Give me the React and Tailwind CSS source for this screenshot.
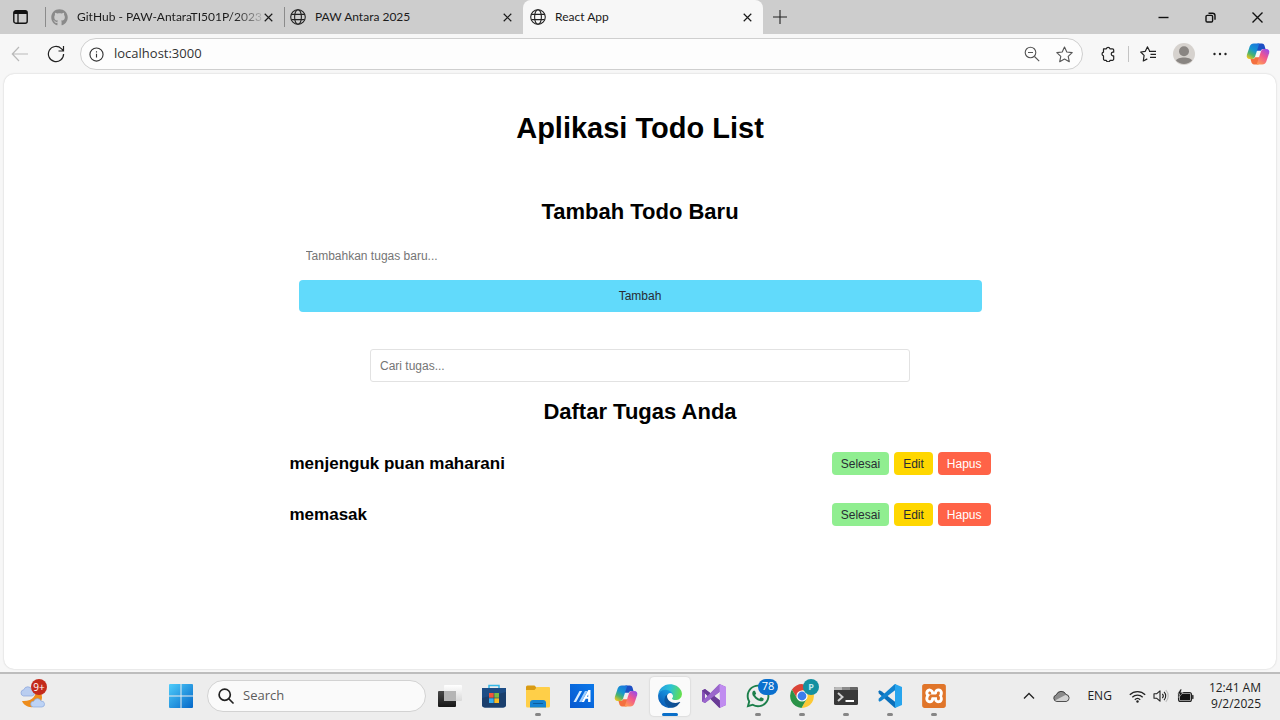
import React from "react";
import { FaGithub, FaWhatsapp } from "react-icons/fa";
import { SiXampp } from "react-icons/si";

function GlobeIcon() {
  return (
    <svg viewBox="0 0 16 16" className="size-4 shrink-0" fill="none" stroke="#222" strokeWidth="1.1">
      <circle cx="8" cy="8" r="7.3" />
      <ellipse cx="8" cy="8" rx="3.4" ry="7.3" />
      <path d="M1.4 5.4h13.2M1.4 10.6h13.2" />
    </svg>
  );
}

function CloseIcon() {
  return (
    <svg viewBox="0 0 10 10" className="size-[9px]" fill="none" stroke="#1a1a1a" strokeWidth="1.3">
      <path d="M.8.8l8.4 8.4M9.2.8L.8 9.2" />
    </svg>
  );
}

function CopilotIcon({ id }) {
  return (
    <svg viewBox="0 0 24 24" className="size-6">
      <defs>
        <linearGradient id={`${id}-a`} x1="0.7" y1="0" x2="0.2" y2="1">
          <stop offset="0" stopColor="#1b78dc" />
          <stop offset="0.4" stopColor="#1596d0" />
          <stop offset="0.7" stopColor="#4db46a" />
          <stop offset="1" stopColor="#f2c51d" />
        </linearGradient>
        <linearGradient id={`${id}-b`} x1="0.8" y1="0" x2="0.2" y2="1">
          <stop offset="0" stopColor="#9a4be8" />
          <stop offset="0.45" stopColor="#f0568f" />
          <stop offset="1" stopColor="#ff9a55" />
        </linearGradient>
      </defs>
      <path fill="#1d4fc4" d="M11.500 1.500h4.300c1.800 0 2.600 1.300 3 2.900l.7 2.600h-1.900c-1.500 0-2.300.6-2.800 1.800h-6z" />
      <path fill="#f4703f" d="M12.500 22.500H8.200c-1.800 0-2.600-1.300-3-2.900L4.500 17h1.900c1.500 0 2.300-.6 2.800-1.800h6z" />
      <path
        fill={`url(#${id}-a)`}
        d="M7.800 1.500h5.500l-4.200 13c-.6 1.700-1.500 2.500-3.100 2.500H3.800C1.300 17 .2 15.300.9 12.800l2.800-8.300c.7-2 2-3 4.100-3z"
      />
      <path
        fill={`url(#${id}-b)`}
        d="M16.200 22.500h-5.500l4.200-13c.6-1.700 1.500-2.500 3.100-2.500h2.200c2.500 0 3.600 1.700 2.900 4.200l-2.800 8.300c-.7 2-2 3-4.100 3z"
      />
    </svg>
  );
}

function StoreIcon() {
  return (
    <svg viewBox="0 0 24 24" className="size-6">
      <path d="M7 5V1.500h10V5" fill="none" stroke="#35b8e8" strokeWidth="1.500" />
      <path d="M0 4h24v16.500a3 3 0 0 1-3 3H3a3 3 0 0 1-3-3z" fill="#1d4d86" />
      <path d="M0 14l24-6v12.500a3 3 0 0 1-3 3H3a3 3 0 0 1-3-3z" fill="#1a3f6d" />
      <path d="M7 9h4.700v4.700H7z" fill="#f0553a" />
      <path d="M12.300 9H17v4.700h-4.700z" fill="#7cbb42" />
      <path d="M7 14.300h4.700V19H7z" fill="#35aef0" />
      <path d="M12.300 14.300H17V19h-4.700z" fill="#fabb22" />
    </svg>
  );
}

function TaskViewIcon() {
  return (
    <svg viewBox="0 0 24 24" className="size-6">
      <defs>
        <linearGradient id="tv-back" x1="0" y1="0" x2="0" y2="1">
          <stop offset="0" stopColor="#484848" />
          <stop offset="1" stopColor="#171717" />
        </linearGradient>
        <linearGradient id="tv-front" x1="0" y1="0" x2="0" y2="1">
          <stop offset="0" stopColor="#ffffff" />
          <stop offset="1" stopColor="#d9d9d9" />
        </linearGradient>
      </defs>
      <rect x="0" y="7" width="18" height="16" rx="1" fill="url(#tv-back)" />
      <rect x="6" y="1" width="18" height="16" rx="1" fill="url(#tv-front)" />
      <path d="M6 7h12v10H6z" fill="#b5b5b5" />
    </svg>
  );
}

function FolderIcon() {
  return (
    <svg viewBox="0 0 24 24" className="size-6">
      <path d="M0 3a1.500 1.500 0 0 1 1.500-1.500h7L11 4v4H0z" fill="#d99b13" />
      <path d="M0 6h8.500L11 3h12a1 1 0 0 1 1 1v18a1.500 1.500 0 0 1-1.500 1.500h-21A1.500 1.500 0 0 1 0 22z" fill="#ffcf48" />
      <path d="M4 23.500V19a3 3 0 0 1 3-3h10a3 3 0 0 1 3 3v4.500z" fill="#1583d2" />
      <path d="M7.500 19.500h9" stroke="#0b5c9c" strokeWidth="1.200" strokeLinecap="round" />
    </svg>
  );
}

function AsusIcon() {
  return (
    <svg viewBox="0 0 24 24" className="size-6">
      <defs>
        <linearGradient id="asus-bg" x1="0" y1="1" x2="1" y2="0">
          <stop offset="0" stopColor="#0758cf" />
          <stop offset="1" stopColor="#0a78ea" />
        </linearGradient>
      </defs>
      <path d="M0 0h24v24H0z" fill="url(#asus-bg)" />
      <path d="M3.500 18L9.500 7h2.600L6.100 18z" fill="#d9edff" />
      <path d="M9 18l6-11h2.500l-6 11z" fill="#9fcfff" />
      <path d="M11.500 18L18.300 6h2.200v12h-2.400v-3.200h-2.400L14 18zM16.900 12.800h1.300v-2.400z" fill="#fff" />
    </svg>
  );
}

function EdgeIcon() {
  return (
    <svg viewBox="4 5 257 254" className="size-6">
      <defs>
        <linearGradient id="edge-a" x1="63" y1="178" x2="241" y2="178" gradientUnits="userSpaceOnUse">
          <stop offset="0" stopColor="#0c59a4" />
          <stop offset="1" stopColor="#114a8b" />
        </linearGradient>
        <linearGradient id="edge-b" x1="157" y1="90" x2="46" y2="225" gradientUnits="userSpaceOnUse">
          <stop offset="0" stopColor="#1b9de2" />
          <stop offset="0.5" stopColor="#127fd1" />
          <stop offset="1" stopColor="#0b5fb8" />
        </linearGradient>
        <linearGradient id="edge-c" x1="20" y1="60" x2="255" y2="125" gradientUnits="userSpaceOnUse">
          <stop offset="0" stopColor="#259fe0" />
          <stop offset="0.45" stopColor="#2cc3d4" />
          <stop offset="1" stopColor="#66e048" />
        </linearGradient>
      </defs>
      <path
        fill="url(#edge-a)"
        d="M235.680 195.460a93.730 93.730 0 0 1-10.540 4.710 101.870 101.870 0 0 1-35.900 6.460c-47.320 0-88.540-32.550-88.540-74.320A31.480 31.480 0 0 1 117.130 105c-42.800 1.800-53.800 46.400-53.800 72.530 0 73.880 68.090 81.370 82.760 81.370 7.910 0 19.840-2.300 27-4.560l1.310-.44a128.340 128.340 0 0 0 66.600-52.800 4 4 0 0 0-5.320-5.640Z"
      />
      <path
        fill="url(#edge-b)"
        d="M110.340 246.340A79.200 79.200 0 0 1 87.600 225a80.720 80.720 0 0 1 29.530-120c3.120-1.470 8.450-4.130 15.540-4a32.350 32.350 0 0 1 25.690 13 31.880 31.880 0 0 1 6.360 18.660c0-.21 24.460-79.600-80-79.600-43.900 0-80 41.660-80 78.210a130.150 130.150 0 0 0 12.110 56 128 128 0 0 0 156.380 67.110 75.550 75.550 0 0 1-62.780-8Z"
      />
      <path
        fill="url(#edge-c)"
        d="M156.940 153.780c-.81 1.050-3.300 2.500-3.300 5.660 0 2.610 1.700 5.120 4.720 7.230 14.380 10 41.490 8.680 41.560 8.680a59.560 59.560 0 0 0 30.270-8.350A61.380 61.380 0 0 0 260.620 114c.26-22.410-8-37.310-11.340-43.910C228.090 28.760 182.350 5 132.620 5a128 128 0 0 0-128 126.200c.48-36.540 36.800-66.050 80-66.050 3.500 0 23.460.34 42 10.070 16.340 8.580 24.900 18.940 30.850 29.210 6.180 10.670 7.280 24.150 7.280 29.520s-2.740 13.330-7.810 19.830Z"
      />
    </svg>
  );
}

function VisualStudioIcon() {
  return (
    <svg viewBox="0 0 24 24" className="size-6">
      <path
        fill="#8752b8"
        fillRule="evenodd"
        d="M17.500 0L8.500 9.300 3 5 0 6.500v11L3 19l5.500-4.300 9 9.300 6.500-3V3zM3 9v6l3-3zM18 7.500v9L12.300 12z"
      />
      <path d="M0 6.500L3 5l15 11.500V24h-.5z" fill="#6a3c96" />
      <path d="M0 17.500L3 19l15-11.500V0h-.5z" fill="#9b67cc" />
      <path d="M17.500 0L24 3v18l-6.500 3 .5-1z" fill="#c08cf0" />
    </svg>
  );
}

function ChromeIcon() {
  return (
    <svg viewBox="0 0 24 24" className="size-6">
      <path d="M12 6.500H22.600A12 12 0 0 0 1.940 5.570L7.240 14.750z" fill="#db4437" />
      <path d="M12 6.500H22.600A12 12 0 0 0 1.940 5.570L7.240 14.750z" fill="#fcc934" transform="rotate(120 12 12)" />
      <path d="M12 6.500H22.600A12 12 0 0 0 1.940 5.570L7.240 14.750z" fill="#2b9348" transform="rotate(240 12 12)" />
      <circle cx="12" cy="12" r="5.600" fill="#fff" />
      <circle cx="12" cy="12" r="4.400" fill="#3b7ded" />
    </svg>
  );
}

function TerminalIcon() {
  return (
    <svg viewBox="0 0 24 24" className="size-6">
      <rect x="0" y="3" width="24" height="18" rx="1.500" fill="#383838" />
      <path d="M0 6V4.500A1.500 1.500 0 0 1 1.500 3H8v3z" fill="#b9b9b9" />
      <path d="M8 3h8v3H8z" fill="#8a8a8a" />
      <path d="M16 3h6.500A1.500 1.500 0 0 1 24 4.500V6h-8z" fill="#666" />
      <path d="M4 9l4.500 4L4 17" fill="none" stroke="#d0d0d0" strokeWidth="2" />
      <path d="M11.500 17H20" stroke="#fff" strokeWidth="2" />
    </svg>
  );
}

function VsCodeIcon() {
  return (
    <svg viewBox="0 0 24 24" className="size-6">
      <path d="M1.600 6.300L3.400 7.300 18 18.500v5.300h-1.400L.6 9.300V7.300z" fill="#0a6fba" />
      <path d="M1.600 17.700l1.800-1L18 5.500V.2h-1.400L.6 14.700v2z" fill="#1283cf" />
      <path d="M17 0l7 3v18l-7 3z" fill="#27a5ee" />
    </svg>
  );
}

function WhatsAppIcon() {
  return <FaWhatsapp className="size-[26px] text-[#1c7f4b]" />;
}

function XamppIcon() {
  return (
    <span className="block size-6 rounded-sm bg-white">
      <SiXampp className="size-6 text-[#e0752a]" />
    </span>
  );
}

function WindowsIcon() {
  return (
    <svg viewBox="0 0 24 24" className="size-6">
      <defs>
        <linearGradient id="win" x1="0" y1="0" x2="24" y2="24" gradientUnits="userSpaceOnUse">
          <stop offset="0" stopColor="#4fcdfb" />
          <stop offset="1" stopColor="#0467c8" />
        </linearGradient>
      </defs>
      <path
        fill="url(#win)"
        d="M1 0h10.500v11.500H0V1a1 1 0 0 1 1-1zM12.500 0H23a1 1 0 0 1 1 1v10.500H12.500zM0 12.500h11.500V24H1a1 1 0 0 1-1-1zM12.500 12.500H24V23a1 1 0 0 1-1 1H12.500z"
      />
    </svg>
  );
}

function WeatherIcon() {
  return (
    <svg viewBox="0 0 26 26" className="size-[26px]">
      <path d="M15 5c3 7-3 14-13 13 3 7 12 8 17 3s4-12-4-16z" fill="#ee8d1c" />
      <path d="M3.500 13a3.200 3.200 0 0 1 .3-6.300 4.200 4.200 0 0 1 8 0A3.200 3.200 0 0 1 12 13z" fill="#b9cdf0" stroke="#8aa4da" strokeWidth=".7" />
      <path d="M13.500 24a2.900 2.900 0 0 1 .2-5.800 4 4 0 0 1 7.500 0A2.900 2.900 0 0 1 22 24z" fill="#bdd3f5" stroke="#8aa9de" strokeWidth=".7" />
    </svg>
  );
}

const TABS = [
  { title: "GitHub - PAW-AntaraTI501P/2023", icon: <FaGithub className="size-[17px] shrink-0 text-[#8a8a8a]" />, faded: true },
  { title: "PAW Antara 2025", icon: <GlobeIcon /> },
];

function TabStrip() {
  return (
    <header className="flex h-[34px] items-center bg-[#cdcdcd] font-['Lato','Open_Sans',sans-serif]">
      <button aria-label="Tab actions" className="ml-[13px] mr-[17px] flex">
        <svg viewBox="0 0 15 14" className="h-[14px] w-[15px]" fill="none" stroke="#111">
          <rect x=".8" y=".8" width="13.400" height="12.400" rx="2" strokeWidth="1.400" />
          <path d="M1 2.500h13" strokeWidth="3" />
          <path d="M5 3v10" strokeWidth="1.300" />
        </svg>
      </button>
      {TABS.map((tab) => (
        <div key={tab.title} className="flex h-full w-[239px] shrink-0 items-center">
          <span className="h-5 w-px shrink-0 bg-[#8b8b8b]" />
          <button className="ml-[5px] flex min-w-0 flex-1 items-center gap-[9px] text-left text-xs text-[#1b1b1b]">
            {tab.icon}
            <span
              className={
                tab.faded
                  ? "whitespace-nowrap bg-gradient-to-r from-[#1b1b1b] from-85% to-[#b5b5b5] bg-clip-text text-transparent"
                  : "whitespace-nowrap"
              }
            >
              {tab.title}
            </span>
          </button>
          <button aria-label={`Close ${tab.title}`} className="mr-[11px] shrink-0">
            <CloseIcon />
          </button>
        </div>
      ))}
      <div className="flex h-full w-[240px] items-center rounded-t-lg bg-[#f7f7f7] px-[7px]">
        <button className="flex flex-1 items-center gap-[9px] text-left text-xs text-[#1b1b1b]">
          <GlobeIcon />
          <span>React App</span>
        </button>
        <button aria-label="Close React App" className="mr-1">
          <CloseIcon />
        </button>
      </div>
      <button aria-label="New tab" className="ml-[10px]">
        <svg viewBox="0 0 14 14" className="size-[14px]" fill="none" stroke="#222" strokeWidth="1.100">
          <path d="M7 0v14M0 7h14" />
        </svg>
      </button>
      <div className="ml-auto mr-[17px] flex items-center gap-9">
        <button aria-label="Minimize">
          <svg viewBox="0 0 11 11" className="size-[11px]" stroke="#111" strokeWidth="1.400">
            <path d="M.5 5.500h10" />
          </svg>
        </button>
        <button aria-label="Restore">
          <svg viewBox="0 0 11 11" className="size-[11px]" fill="none" stroke="#111" strokeWidth="1.400">
            <rect x="1" y="3.400" width="6.600" height="6.600" rx="1.200" />
            <path d="M3.500 1.300h4a2.500 2.500 0 0 1 2.500 2.500v4" />
          </svg>
        </button>
        <button aria-label="Close window">
          <svg viewBox="0 0 11 11" className="size-[11px]" stroke="#111" strokeWidth="1.400">
            <path d="M.5.5l10 10M10.500.5l-10 10" />
          </svg>
        </button>
      </div>
    </header>
  );
}

function Toolbar() {
  return (
    <div className="flex h-10 items-center pr-[10px] pl-[11px]">
      <button aria-label="Back" disabled>
        <svg viewBox="0 0 18 18" className="size-[18px]" fill="none" stroke="#b9b9b9" strokeWidth="1.200">
          <path d="M17 9H1.500M8 2L1.300 9 8 16" />
        </svg>
      </button>
      <button aria-label="Refresh" className="ml-[18px]">
        <svg viewBox="0 0 18 18" className="size-[18px]" fill="none" stroke="#222" strokeWidth="1.200">
          <path d="M16.600 9a7.600 7.600 0 1 1-2.300-5.400L16.300 5.500M16.500 1v5h-5" />
        </svg>
      </button>
      <div className="ml-[15px] flex h-8 min-w-0 flex-1 items-center rounded-full border border-[#cfcfcf] bg-[#fdfdfd] pr-[9px] pl-2">
        <svg viewBox="0 0 16 16" className="size-[15px] shrink-0" fill="none" stroke="#333" strokeWidth="1.200">
          <circle cx="8" cy="8" r="7" />
          <path d="M8 7.200v4M8 4.500v1.300" />
        </svg>
        <input
          aria-label="Address"
          defaultValue="localhost:3000"
          className="ml-[10px] min-w-0 flex-1 bg-transparent text-[13px] text-[#333] outline-none"
        />
        <button aria-label="Zoom out">
          <svg viewBox="0 0 16 16" className="size-4" fill="none" stroke="#555" strokeWidth="1.100">
            <circle cx="6.500" cy="6.500" r="5.300" />
            <path d="M10.500 10.500l4.700 4.700M4 6.500h5" />
          </svg>
        </button>
        <button aria-label="Add to favorites" className="ml-4">
          <svg viewBox="0 0 17 17" className="size-[17px]" fill="none" stroke="#555" strokeWidth="1.100" strokeLinejoin="round">
            <path d="M8.500 1l2.300 5 5.400.6-4 3.700 1.100 5.400-4.800-2.700-4.800 2.700 1.100-5.400-4-3.700 5.400-.6z" />
          </svg>
        </button>
      </div>
      <button aria-label="Extensions" className="ml-[17px]">
        <svg viewBox="0 0 16 16" className="size-4" fill="none" stroke="#222" strokeWidth="1.200" strokeLinejoin="round">
          <path d="M3.500 2.800h2.800a1.900 1.900 0 0 1 3.700 0h2.500a1.200 1.200 0 0 1 1.200 1.200v2.200h-1a1.900 1.900 0 0 0 0 3.700h1v3.200a1.200 1.200 0 0 1-1.200 1.200H10a1.900 1.900 0 0 1-3.700 0H4.700a1.200 1.200 0 0 1-1.200-1.200V9.900a1.900 1.900 0 0 1 0-3.700z" />
        </svg>
      </button>
      <span className="ml-3 h-4 w-px bg-[#c4c4c4]" />
      <button aria-label="Favorites" className="ml-[11px]">
        <svg viewBox="0 0 17 16" className="h-4 w-[17px]" fill="none" stroke="#222" strokeWidth="1.200" strokeLinejoin="round">
          <path d="M9.500 4.800L7.400.900 5.300 5.300.7 6l3.400 3.400-.8 5.600 4-2.100M9 5.300h7M10.500 8.300H16M10 11.300h6" />
        </svg>
      </button>
      <button aria-label="Profile" className="ml-4">
        <svg viewBox="0 0 22 22" className="size-[22px]">
          <circle cx="11" cy="11" r="11" fill="#d6d2ce" />
          <circle cx="11" cy="8.300" r="5" fill="#898582" />
          <path d="M3 17.500C4.500 13.500 17.500 13.500 19 17.500A11 11 0 0 1 3 17.500z" fill="#898582" />
        </svg>
      </button>
      <button aria-label="Settings and more" className="ml-[18px]">
        <svg viewBox="0 0 14 4" className="h-1 w-[14px]" fill="#222">
          <circle cx="1.500" cy="2" r="1.200" />
          <circle cx="7" cy="2" r="1.200" />
          <circle cx="12.500" cy="2" r="1.200" />
        </svg>
      </button>
      <button aria-label="Copilot" className="ml-[19px]">
        <CopilotIcon id="bar" />
      </button>
    </div>
  );
}

function TodoPage() {
  const todos = ["menjenguk puan maharani", "memasak"];
  const action = "h-[23px] rounded px-[9px] text-xs";
  return (
    <main className="mx-1 flex-1 rounded-[10px] bg-white px-4 pt-[37px] pb-8 font-['Liberation_Sans',Arial,sans-serif] text-black shadow-[0_0_2px_rgba(0,0,0,0.2)]">
      <h1 className="text-center text-[29px] leading-[34px] font-bold">Aplikasi Todo List</h1>
      <div className="mx-auto max-w-[701px]">
        <form className="mt-[54px] px-[9px]" onSubmit={(e) => e.preventDefault()}>
          <h2 className="text-center text-[22px] leading-[26px] font-bold">Tambah Todo Baru</h2>
          <input
            aria-label="Tambahkan tugas baru"
            placeholder="Tambahkan tugas baru..."
            className="mt-[15px] block h-8 w-full px-[7px] text-xs outline-none placeholder:text-[#757575]"
          />
          <button className="mt-2 block h-8 w-full rounded bg-[#61dafb] text-xs text-[#282c34]">Tambah</button>
        </form>
        <input
          type="search"
          aria-label="Cari tugas"
          placeholder="Cari tugas..."
          className="mx-auto mt-[37px] block h-[33px] w-full max-w-[540px] rounded-[3px] border border-[#e2e2e2] px-[9px] text-xs outline-none placeholder:text-[#757575]"
        />
        <h2 className="mt-[17px] text-center text-[22px] leading-[26px] font-bold">Daftar Tugas Anda</h2>
        <ul className="mt-[13px]">
          {todos.map((todo) => (
            <li key={todo} className="flex h-[51px] items-center justify-between">
              <h3 className="text-[17px] font-bold">{todo}</h3>
              <div className="flex gap-[5px]">
                <button className={`${action} bg-[#90ee90] text-[#282c34]`}>Selesai</button>
                <button className={`${action} bg-[#ffd700] text-[#282c34]`}>Edit</button>
                <button className={`${action} bg-[#ff6347] text-white`}>Hapus</button>
              </div>
            </li>
          ))}
        </ul>
      </div>
    </main>
  );
}

const APPS = [
  { name: "Task View", icon: <TaskViewIcon /> },
  { name: "Microsoft Store", icon: <StoreIcon /> },
  { name: "File Explorer", icon: <FolderIcon />, running: true },
  { name: "MyASUS", icon: <AsusIcon /> },
  { name: "Copilot", icon: <CopilotIcon id="dock" /> },
  { name: "Microsoft Edge", icon: <EdgeIcon />, active: true },
  { name: "Visual Studio", icon: <VisualStudioIcon /> },
  { name: "WhatsApp", icon: <WhatsAppIcon />, running: true, badge: "78" },
  { name: "Chrome", icon: <ChromeIcon />, running: true, profile: "P" },
  { name: "Terminal", icon: <TerminalIcon />, running: true },
  { name: "Visual Studio Code", icon: <VsCodeIcon />, running: true },
  { name: "XAMPP", icon: <XamppIcon />, running: true },
];

function DockButton({ app }) {
  return (
    <button
      aria-label={app.name}
      className={
        app.active
          ? "relative flex h-[39px] w-10 items-center justify-center rounded bg-[#fafafa] shadow-[0_0_2px_rgba(0,0,0,0.2)]"
          : "relative flex h-[39px] w-10 items-center justify-center rounded"
      }
    >
      {app.icon}
      {app.active && <span className="absolute bottom-0 h-[3px] w-4 rounded-full bg-[#0a6fc9]" />}
      {app.running && <span className="absolute bottom-0 h-[3px] w-[6px] rounded-full bg-[#868686]" />}
      {app.badge && (
        <span className="absolute top-[2px] right-0 flex h-4 w-5 items-center justify-center rounded-full bg-[#0a70ce] text-[11px] text-white">
          {app.badge}
        </span>
      )}
      {app.profile && (
        <span className="absolute top-[2px] right-[3px] flex size-4 items-center justify-center rounded-full bg-[#1490a0] text-[9px] font-bold text-[#bfe9ee]">
          {app.profile}
        </span>
      )}
    </button>
  );
}

function Taskbar() {
  return (
    <footer className="flex h-12 shrink-0 items-center border-t-2 border-[#bdbdbd] bg-[#ededed] pb-[2px] text-[#222]">
      <button aria-label="Weather" className="relative ml-5">
        <WeatherIcon />
        <span className="absolute -top-1 -right-px flex size-4 items-center justify-center rounded-full bg-[#c42b1c] text-[10px] text-white">
          9+
        </span>
      </button>
      <button aria-label="Start" className="ml-[123px]">
        <WindowsIcon />
      </button>
      <label className="ml-[14px] flex h-8 w-[219px] items-center gap-[9px] rounded-full border border-[#d2d2d2] bg-[#fafafa] px-[10px]">
        <svg viewBox="0 0 16 16" className="size-4 shrink-0" fill="none" stroke="#222" strokeWidth="1.700" strokeLinecap="round">
          <circle cx="6.700" cy="6.700" r="5.600" />
          <path d="M11 11l4 4" />
        </svg>
        <input
          aria-label="Search"
          placeholder="Search"
          className="min-w-0 flex-1 bg-transparent text-[13px] outline-none placeholder:text-[#5c5c5c]"
        />
      </label>
      <nav aria-label="Apps" className="ml-1 flex gap-1">
        {APPS.map((app) => (
          <DockButton key={app.name} app={app} />
        ))}
      </nav>
      <div className="mr-[19px] ml-auto flex items-center">
        <button aria-label="Hidden icons">
          <svg viewBox="0 0 12 8" className="h-2 w-3" fill="none" stroke="#222" strokeWidth="1.300">
            <path d="M1 6.500l5-5 5 5" />
          </svg>
        </button>
        <button aria-label="OneDrive" className="ml-[18px]">
          <svg viewBox="0 0 17 12" className="h-3 w-[17px]">
            <path d="M4 11.400a3.300 3.300 0 0 1-.7-6.500A5.200 5.200 0 0 1 13 4.500a3.500 3.500 0 0 1 .3 6.900z" fill="#8b8b8b" stroke="#333" strokeWidth=".9" />
            <path d="M2 10.500L9.500 6.500l3-1.500a3 3 0 0 1 .8 5.900H4z" fill="#d2d2d2" />
          </svg>
        </button>
        <button className="ml-[17px] text-xs">ENG</button>
        <button aria-label="Network" className="ml-[17px]">
          <svg viewBox="0 0 17 13" className="h-[13px] w-[17px]" fill="none" stroke="#222" strokeWidth="1.300">
            <path d="M.8 4.800a10.900 10.900 0 0 1 15.400 0M3.300 7.300a7.400 7.400 0 0 1 10.400 0M5.800 9.700a3.900 3.900 0 0 1 5.400 0" />
            <circle cx="8.500" cy="11.500" r="1.200" fill="#222" stroke="none" />
          </svg>
        </button>
        <button aria-label="Volume" className="ml-[7px]">
          <svg viewBox="0 0 16 14" className="h-[14px] w-4" fill="none" stroke="#222" strokeWidth="1.100" strokeLinejoin="round">
            <path d="M1 4.800h2.500L7 1.800v10.400l-3.500-3H1zM9.300 4.800a3.200 3.200 0 0 1 0 4.400M11 2.900a5.800 5.800 0 0 1 0 8.200" />
            <path d="M12.800 1.200a8.200 8.200 0 0 1 0 11.600" stroke="#bbb" />
          </svg>
        </button>
        <button aria-label="Battery" className="ml-2">
          <svg viewBox="0 0 17 14" className="h-[14px] w-[17px]">
            <rect x="1.500" y="3.600" width="13" height="8.800" rx="2" fill="none" stroke="#222" strokeWidth="1.100" />
            <rect x="2.700" y="4.800" width="10.600" height="6.400" rx=".8" fill="#111" />
            <path d="M15.300 6.300h.9v3.400h-.9z" fill="#222" stroke="#222" strokeWidth=".6" />
            <path d="M3.500 0L.5 4.800h2L1.800 8.500l4.200-5H3.800L4.800 0z" fill="#111" stroke="#ededed" strokeWidth=".5" />
          </svg>
        </button>
        <button className="ml-[15px] text-right text-xs leading-4">
          12:41 AM
          <br />
          9/2/2025
        </button>
      </div>
    </footer>
  );
}

export default function App() {
  return (
    <div className="flex min-h-screen flex-col bg-[#f7f7f7] font-['Open_Sans','Noto_Sans',sans-serif]">
      <TabStrip />
      <Toolbar />
      <TodoPage />
      <div className="h-[3px]" />
      <Taskbar />
    </div>
  );
}
